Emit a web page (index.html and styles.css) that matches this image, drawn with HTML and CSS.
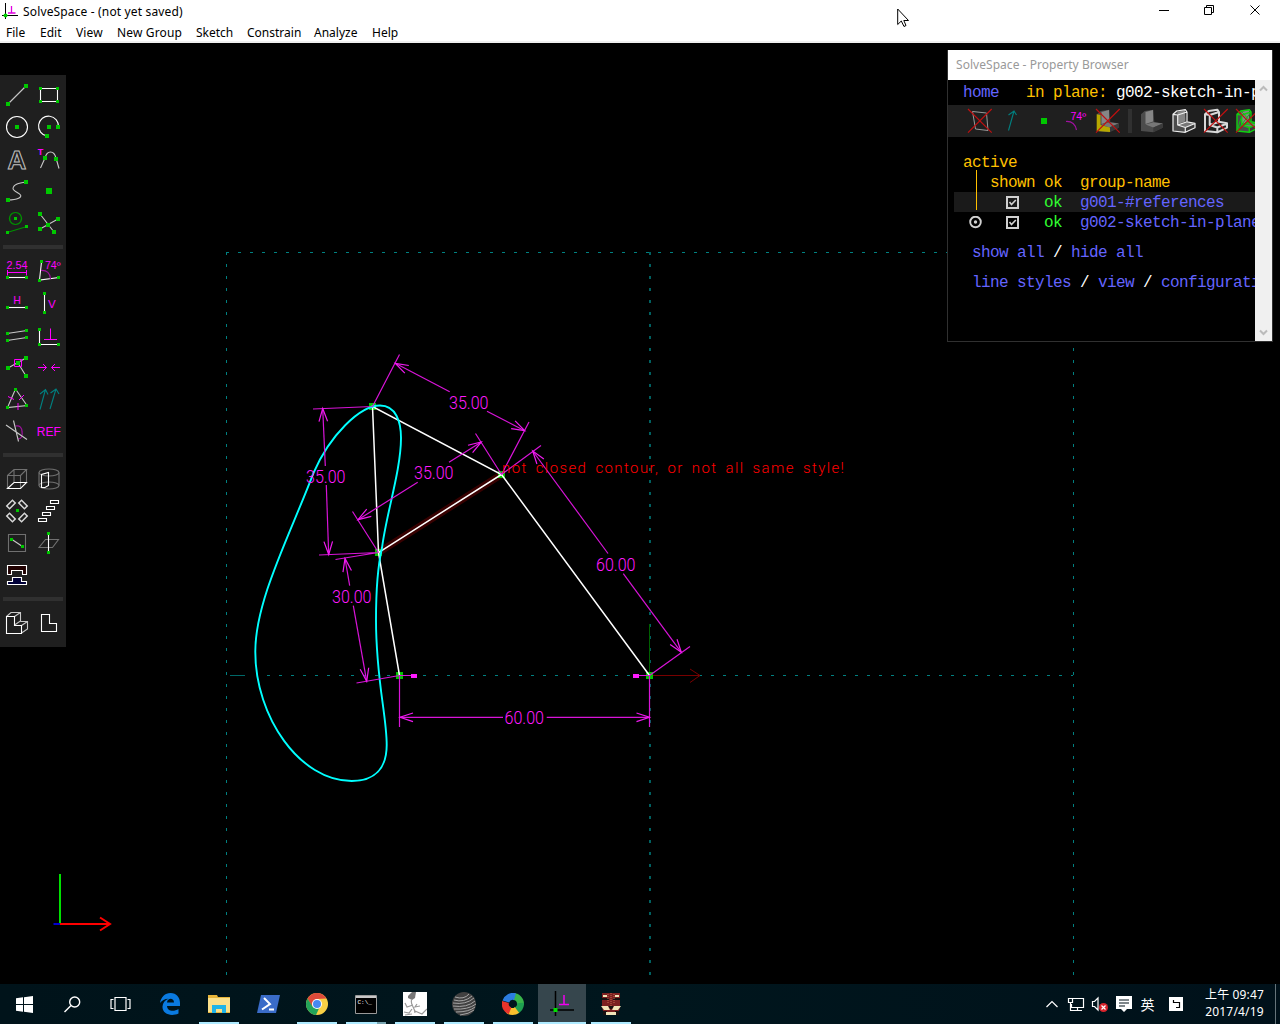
FILE: index.html
```html
<!DOCTYPE html>
<html lang="zh-Hant">
<head>
<meta charset="utf-8">
<title>SolveSpace - (not yet saved)</title>
<link rel="stylesheet" href="styles.css">
</head>
<body>
<svg class="defs" width="0" height="0">
  <defs>
    <marker id="arrow" viewBox="-14 -6 16 12" markerWidth="16" markerHeight="12" refX="0" refY="0" markerUnits="userSpaceOnUse" orient="auto-start-reverse"><path d="M-13 -4.3L0 0L-13 4.3" fill="none" stroke="#f01af0" stroke-width="1.2"/></marker>
    <symbol id="solid" viewBox="0 0 32 32">
      <path fill="#4c4c4c" d="M5 9.3L8.7 6L17.3 4.7L18.3 17.3L26.7 18.3V22.7L17.3 27.3L5 26Z"/>
      <path fill="#868686" d="M9.5 7L17 5V16.5L9.5 19Z"/>
      <path fill="#777" d="M9.5 19.5L17.5 17.3L26.5 18.5L17.3 22.5Z"/>
      <path fill="#3a3a3a" d="M17.3 22.5L26.7 18.5V22.7L17.3 27.3Z"/>
    </symbol>
    <symbol id="edges" viewBox="0 0 32 32"><path fill="none" stroke-linejoin="round" d="M5 9.3L8.7 6L17.3 4.7L19 7V16.8L27 18.3V22.7L17.3 27.3L5 26ZM5 9.3L9.7 10V20L17.3 22.5L27 18.5M9.7 10L19 7M9.7 20L18.5 17M17.3 22.5V27"/></symbol>
    <symbol id="cross" viewBox="0 0 32 32"><path fill="none" stroke="#c01010" stroke-width="1.2" d="M4 4L27.7 27.7M27.7 4L4 27.7"/></symbol>
  </defs>
</svg>

<header class="titlebar">
  <svg class="app-icon" width="17" height="17" viewBox="0 0 17 17"><path d="M3.5 1V17M0 13.5H16" stroke="#000"/><path d="M9.5 4V11M6 11H13.500" stroke="#e000e0" stroke-width="1.3"/><circle cx="3.500" cy="13.500" r="2" fill="#00d000"/></svg>
  <span class="title">SolveSpace - (not yet saved)</span>
  <svg class="win-controls" width="110" height="22" viewBox="0 0 110 22" fill="none" stroke="#000"><path d="M4 10.500H14M49.500 7.500H56.500V14.500H49.500ZM51.500 7V5.500H58.500V12.500H57M95.500 5.500L104.500 14.500M104.500 5.500L95.500 14.500"/></svg>
</header>
<nav class="menubar">
  <span class="w-file">File</span><span class="w-edit">Edit</span><span class="w-view">View</span><span class="w-new">New Group</span><span class="w-sketch">Sketch</span><span class="w-con">Constrain</span><span class="w-ana">Analyze</span><span>Help</span>
</nav>

<main class="workspace">
<svg class="canvas" width="1280" height="941" viewBox="0 43 1280 941">
  <g fill="none" stroke="#008080" stroke-dasharray="3 9">
    <path d="M226.500 252V976M1073.500 252V976"/>
    <path d="M650 252V976" stroke-width="1.5"/>
    <path d="M226 252.500H1073"/>
    <path d="M267 675.500H1073"/>
    <path d="M230 675.500H245" stroke-dasharray="none" stroke="#006868"/>
  </g>
  <path d="M649.500 624V675" stroke="#006000"/>
  <path d="M650 675.500H700M690 669L700 675.500L690 682.500" fill="none" stroke="#780000"/>
  <path d="M501.500 474.500L378.500 552.500" stroke="#380000" stroke-width="7"/>
  <g fill="#00c800"><path d="M369 403h7v7h-7zM375 549h7v7h-7zM498 471h7v7h-7zM396 672h7v7h-7zM646 672h7v7h-7z"/></g>
  <path d="M378.500 552.500L372.500 406.500L501.500 474.500L378.500 552.500L399.500 675.500M501.500 474.500L649.500 675.500" fill="none" stroke="#fff" stroke-width="1.500"/>
  <path class="trace" d="M380 405.500C396 405.500 401 422 401 438C401 470 386 515 382 548C378 565 376 590 376 620C376 680 386.700 715 386.700 745C386.700 768 375 781 351.700 781C300 781 255.300 717 255.300 651.700C255.300 600 290 535 313.300 473.300C330 435 360 405.500 380 405.500Z"/>
  <g class="dim">
    <path d="M372.500 406.500L399.500 354.500M501.500 474.500L529 422M372.500 406.500L313 409M378.500 552.500L319 555M378.500 552.500L352.500 511.500M501.500 474.500L475.500 433.500M501.500 474.500L541 445.500M649.500 675.500L690 646.500M378.500 552.500L335.500 559.500M399.500 675.500L356.500 683M399.500 675V727M649.500 675V727M400 675.500H412M650 675.500H638"/>
    <path marker-start="url(#arrow)" d="M395.300 363.300L449.700 391.700"/>
    <path marker-end="url(#arrow)" d="M487 411.300L524.700 430.700"/>
    <path marker-start="url(#arrow)" d="M322.700 408.500L325.300 466"/>
    <path marker-end="url(#arrow)" d="M326.300 485L328.700 554.500"/>
    <path marker-start="url(#arrow)" d="M358 519.700L417.700 482.300"/>
    <path marker-end="url(#arrow)" d="M449 462.300L481.300 442"/>
    <path marker-start="url(#arrow)" d="M532.700 451L608 553.500"/>
    <path marker-end="url(#arrow)" d="M623.300 573.700L681.300 652.300"/>
    <path marker-start="url(#arrow)" d="M345 558.500L349.700 585.700"/>
    <path marker-end="url(#arrow)" d="M353.300 605.700L366.700 681.300"/>
    <path marker-start="url(#arrow)" d="M400 717.300H503"/>
    <path marker-end="url(#arrow)" d="M546.700 717.300H649.500"/>
  </g>
  <path fill="#ff1aff" d="M411 674h6v4h-6zM633 674h6v4h-6z"/>
  <g class="dim-text">
    <text x="449" y="408.700" textLength="39.500" lengthAdjust="spacingAndGlyphs">35.00</text>
    <text x="306" y="482.700" textLength="39.500" lengthAdjust="spacingAndGlyphs">35.00</text>
    <text x="414" y="478.700" textLength="39.500" lengthAdjust="spacingAndGlyphs">35.00</text>
    <text x="596" y="570.500" textLength="39.500" lengthAdjust="spacingAndGlyphs">60.00</text>
    <text x="332" y="602.700" textLength="39.500" lengthAdjust="spacingAndGlyphs">30.00</text>
    <text x="504.500" y="723.700" textLength="39.500" lengthAdjust="spacingAndGlyphs">60.00</text>
  </g>
  <text class="error-text" x="502" y="472.700" textLength="342">not closed contour, or not all same style!</text>
  <g fill="none" stroke-width="2"><path d="M60 874V924" stroke="#00e000"/><path d="M60 924H110M100 917.500L110 924L100 930.500" stroke="#f00"/><path d="M53.500 924H60" stroke="#0000d0"/></g>
</svg>

<aside class="toolbar">
  <div class="tools">
    <svg class="t"><path class="lg" d="M7 25L25 7"/><path class="g" d="M5 23h4v4H5zM23 5h4v4h-4z"/></svg>
    <svg class="t"><path class="w" d="M7.500 9.500H24.500V22.500H7.500Z"/><path class="g" d="M6 8h3v3H6zM23 8h3v3h-3zM6 21h3v3H6zM23 21h3v3h-3z"/></svg>
    <svg class="t"><circle class="w" cx="16" cy="16" r="10.500"/><path class="g" d="M14 14h4v4h-4z"/></svg>
    <svg class="t"><path class="w" d="M25.500 16A10 10 0 1 0 14 25"/><path class="g" d="M14 14h4v4h-4zM23 14h4v4h-4zM12 23h4v4h-4z"/></svg>
    <svg class="t"><text class="letter" x="16" y="26" text-anchor="middle">A</text></svg>
    <svg class="t"><path class="lg" d="M7.500 25L12 15C14 7 21 7 23 15L26 25.500"/><path class="g" d="M10 13h4v4h-4zM21 14h4v4h-4z"/><text class="m" x="4.800" y="12.300" font-size="9" font-weight="bold">T</text></svg>
    <svg class="t"><path class="lg" d="M7 25C17 25 21 22 19.500 20C18 18 12 16 12 13.500C12.500 9 18 8 25 7"/><path class="g" d="M5 23h4v4H5zM23 5h4v4h-4z"/></svg>
    <svg class="t"><path class="g" d="M13 13h6v6h-6z"/></svg>
    <svg class="t"><path stroke="#009000" fill="none" stroke-width="1.200" d="M6 25.500L26 19.500M14.500 5.500a6 6 0 1 0 .01 0"/><path class="g" d="M13 10h3v3h-3zM5 24h3v3H5zM24 18h3v3h-3z"/></svg>
    <svg class="t"><path class="lg" d="M7 7L21 25M25 12L7 22"/><path class="g" d="M5 5h4v4H5zM23 10h4v4h-4zM13 16h4v4h-4zM5 20h4v4H5zM19 23h4v4h-4z"/></svg>
  </div>
  <hr>
  <div class="tools">
    <svg class="t"><text class="m" x="5.500" y="13.700" font-size="10" textLength="21" lengthAdjust="spacingAndGlyphs">2.54</text><path class="mg" d="M6.500 15V20.500M25.500 15V20.500M6.500 17.500H25.500"/><path class="w" d="M6 22.500H26"/><path class="g" d="M5 21h3v3H5zM24 21h3v3h-3z"/></svg>
    <svg class="t"><path class="w" d="M8.500 7L6.500 25L26 22.500"/><path class="pu" d="M8 15.500Q17 15 17.500 24"/><text class="m" x="12" y="14" font-size="10" textLength="15.500" lengthAdjust="spacingAndGlyphs">74º</text><path class="g" d="M7 5h3v3H7zM5 24h3v3H5zM24 21h3v3h-3z"/></svg>
    <svg class="t"><text class="m" x="12.200" y="17" font-size="10.500">H</text><path class="w" d="M6 20.500H26"/><path class="g" d="M5 19h3v3H5zM24 19h3v3h-3z"/></svg>
    <svg class="t"><text class="m" x="15" y="20.500" font-size="11.500">V</text><path class="w" d="M11.500 6V26"/><path class="g" d="M10 5h3v3h-3zM10 24h3v3h-3z"/></svg>
    <svg class="t"><path class="lg" d="M6 14.500L26 11.500M6 21.500L26 18.500"/><path class="g" d="M5 13h3v3H5zM24 10h3v3h-3zM5 20h3v3H5zM24 17h3v3h-3z"/></svg>
    <svg class="t"><path class="w" d="M6.500 11V25.500H26"/><path class="mg" d="M17.500 9.500V20.500M11 20.500H24"/><path class="g" d="M5 9h3v3H5zM5 24h3v3H5zM24 24h3v3h-3z"/></svg>
    <svg class="t"><path class="lg" d="M7 17L25 7M17 12L25 25"/><path class="g" d="M5 15h4v4H5zM15 10h4v4h-4zM23 5h4v4h-4zM23 23h4v4h-4z"/><path class="mg" d="M13.500 8.500H20.500V15.500H13.500Z"/></svg>
    <svg class="t"><path class="mg" d="M5 16.500H13.500M10 13L13.500 16.500L10 20M27 16.500H18.500M22 13L18.500 16.500L22 20"/></svg>
    <svg class="t"><path class="lg" d="M14.500 6L6.500 24.500L26 22.500Z"/><path class="mg" d="M7 13.500L13 16.500M23 12L18 17M17 20V27"/><path class="g" d="M13 5h3v3h-3zM5 23h3v3H5zM24 21h3v3h-3z"/></svg>
    <svg class="t"><path class="te" d="M7 26.500L12.500 6.500M7 11L12.500 6.500L15 11.500M17 26L23 6M17.500 10L23 6L26 11"/></svg>
    <svg class="t"><path class="pu" d="M14.500 11C19 10 21 13 21 16.500C22 21 20 24 17 24"/><path class="lg" d="M5 10L26 24.500M12.500 5.500L17.500 26.500"/></svg>
    <svg class="t"><text class="m" x="3.800" y="20.700" font-size="12.500" textLength="24" lengthAdjust="spacingAndGlyphs">REF</text></svg>
  </div>
  <hr>
  <div class="tools">
    <svg class="t"><path class="gr" d="M6.500 25V12.500H19.500V25M6.500 12.500L13 6.500H25.500L19.500 12.500M13 6.500V19M25.500 6.500V19"/><path class="w" d="M6.500 25.500H19.500L25.500 19.500H13Z"/></svg>
    <svg class="t"><path class="gr" d="M6 9.500V22.500M26 9.500V22.500"/><ellipse class="gr" cx="16" cy="9.500" rx="10" ry="3.500"/><ellipse class="gr" cx="16" cy="22.500" rx="10" ry="3.500"/><path class="w" d="M8.500 11.500V24.500H12L15.500 22.500V9.500L8.500 11.500Z"/></svg>
    <svg class="t"><g class="w pills"><rect x="6" y="7.500" width="8" height="4" transform="rotate(-45 10 9.500)"/><rect x="18" y="7.500" width="8" height="4" transform="rotate(45 22 9.500)"/><rect x="6" y="20.500" width="8" height="4" transform="rotate(45 10 22.500)"/><rect x="18" y="20.500" width="8" height="4" transform="rotate(-45 22 22.500)"/></g><path class="g" d="M15 14h3v3h-3z"/></svg>
    <svg class="t"><path class="w" d="M17.500 5.500h8v3h-8zM13.500 11.500h8v3h-8zM9.500 17.500h8v3h-8zM5.500 23.500h8v3h-8z"/></svg>
    <svg class="t"><path class="gr" d="M7.500 7.500H24.500V24.500H7.500Z"/><path class="lg" d="M11 12.500L21.500 19.500"/><path class="g" d="M9 11h3v3H9zM20 18h3v3h-3z"/></svg>
    <svg class="t"><path class="gr" d="M12.500 12.500H25.500L19.500 20.500H6Z"/><path class="w" d="M15.500 6V26"/><path class="g" d="M14 5h3v3h-3zM14 24h3v3h-3z"/></svg>
    <svg class="t"><path class="w die-top" d="M6.500 6.500H25.500V15.500H21.500V11.500H10.500V15.500H6.500Z"/><path class="w die-base" d="M11.500 18.500H20.500V22.500H25.500V25.500H6.500V22.500H11.500Z"/></svg>
    <svg class="t"></svg>
  </div>
  <hr>
  <div class="tools">
    <svg class="t"><path class="lg" d="M5.500 9.500L10 5.500H19.500V14L13.500 18M13.500 9.500L19.500 5.500M19.500 14.500H26.500V22L20.500 26M20.500 18.500L26.500 14.500"/><path class="w" d="M5.500 9.500H13.500V18.500H20.500V26.500H5.500Z"/></svg>
    <svg class="t"><path class="w" d="M8.500 7.500H16.500V16.500H23.500V24.500H8.500Z"/></svg>
  </div>
</aside>

<section class="browser">
  <div class="browser-title">SolveSpace - Property Browser</div>
  <div class="browser-body">
    <div class="browser-text">
      <div class="row first"><b>home</b>   <i>in plane:</i> g002-sketch-in-plane</div>
      <div class="strip">
        <svg class="t"><path fill="none" stroke="#999" d="M8.500 6.500L22.500 8L24 25.500L11.500 24Z"/><use href="#cross"/></svg>
        <svg class="t"><path class="te" d="M12.500 25.500L18 6M12.500 10L18 6L20.500 10"/></svg>
        <svg class="t"><path class="g" d="M13 13h6v6h-6z"/></svg>
        <svg class="t"><path class="pu" d="M6 16.500Q14.500 16 16.500 25"/><text class="m" x="10.500" y="15" font-size="10" textLength="15.500" lengthAdjust="spacingAndGlyphs">74º</text></svg>
        <svg class="t"><use href="#solid"/><path fill="#b8a800" d="M4.700 9.300L8.500 10V20L18 22.500V27L4.700 26Z"/><use href="#cross"/></svg>
        <span class="strip-gap"></span>
        <svg class="t"><use href="#solid"/></svg>
        <svg class="t"><use href="#solid"/><use href="#edges" stroke="#eee" stroke-width="1.200"/></svg>
        <svg class="t"><use href="#edges" stroke="#d8d8d8" stroke-width="2"/><use href="#cross"/></svg>
        <svg class="t"><use href="#solid"/><use href="#edges" stroke="#10d010" stroke-width="1.400"/><path stroke="#10c010" fill="none" d="M5 26L19 7M10 10L5 26M10 20L27 18M9 6L19 17"/><use href="#cross"/></svg>
      </div>
      <div class="row"><i>active</i></div>
      <div class="row"><i>   shown ok  group-name</i></div>
      <div class="row cells shade"><span class="c-act"></span><span class="c-shown"><svg width="13" height="13" viewBox="0 0 13 13" fill="none" stroke="#d0d0d0"><path stroke-width="2" d="M1 1H12V12H1Z"/><path stroke-width="1.600" d="M3.500 6L5.500 8.500L9.800 4"/></svg></span><span class="c-ok">ok</span><b>g001-#references</b></div>
      <div class="row cells"><span class="c-act"><svg width="13" height="13" viewBox="0 0 13 13"><circle cx="6.500" cy="6" r="5.300" fill="none" stroke="#d0d0d0" stroke-width="1.900"/><circle cx="6.500" cy="6" r="1.700" fill="#d0d0d0"/></svg></span><span class="c-shown"><svg width="13" height="13" viewBox="0 0 13 13" fill="none" stroke="#d0d0d0"><path stroke-width="2" d="M1 1H12V12H1Z"/><path stroke-width="1.600" d="M3.500 6L5.500 8.500L9.800 4"/></svg></span><span class="c-ok">ok</span><b>g002-sketch-in-plane</b></div>
      <div class="row spaced"> <b>show all</b> / <b>hide all</b></div>
      <div class="row spaced"> <b>line styles</b> / <b>view</b> / <b>configuration</b></div>
      <span class="tree-line"></span>
    </div>
    <div class="scroll">
      <svg width="9" height="7" viewBox="0 0 9 7"><path d="M1 5.500L4.500 2L8 5.500" fill="none" stroke="#bbb" stroke-width="2"/></svg>
      <svg width="9" height="7" viewBox="0 0 9 7"><path d="M1 1.500L4.500 5L8 1.500" fill="none" stroke="#bbb" stroke-width="2"/></svg>
    </div>
  </div>
</section>
</main>

<footer class="taskbar">
  <div class="slot"><svg width="17" height="17" viewBox="0 0 17 17"><path fill="#fff" d="M0 2.300L7 1.300V8H0zM8 1.200L17 0V8H8zM0 9H7V15.700L0 14.700zM8 9H17V17L8 15.800z"/></svg></div>
  <div class="slot"><svg width="17" height="17" viewBox="0 0 17 17" fill="none" stroke="#fff" stroke-width="1.400"><circle cx="10.700" cy="6" r="5"/><path d="M7 9.500L.5 16"/></svg></div>
  <div class="slot"><svg width="21" height="16" viewBox="0 0 21 16" fill="none" stroke="#fff" stroke-width="1.200"><path d="M5 1.500H16V14.500H5ZM3.500 3.500H1V12.500H3.500M17.500 3.500H20V12.500H17.500"/></svg></div>
  <div class="apps">
    <div class="slot"><svg width="22" height="22" viewBox="0 0 22 22"><path fill="#0a7ae0" d="M1 10C2 4 6 0 11.500 0C17.500 0 21 4.500 21 10V13H8C8.500 19 15.500 18.500 19.500 16V20.500C12 24 3 21 3.500 13.500C3.700 10 6 7 9.500 5.700C5.500 5.800 3 7.500 1 10ZM8 9.500H15C15 4.500 8.500 4.500 8 9.500Z"/></svg></div>
    <div class="slot run"><svg width="22" height="18" viewBox="0 0 22 18"><path fill="#e8b53a" d="M0 0H9L10 2H22V18H0z"/><path fill="#fbe08a" d="M0 3H22V17H0z"/><path fill="#1fb4e8" d="M4 10H18V18H14V14H8V18H4z"/></svg></div>
    <div class="slot"><svg width="23" height="18" viewBox="0 0 23 18"><path fill="#3a6cc8" d="M4 0H23L19 18H0z"/><path d="M7 3L13 9L5 14.500M12 14.500H17" fill="none" stroke="#fff" stroke-width="2"/></svg></div>
    <div class="slot run"><svg width="22" height="22" viewBox="0 0 22 22"><circle cx="11" cy="11" r="11" fill="#f9d045"/><path fill="#dd4a3a" d="M1.500 5.500A11 11 0 0 1 20.500 5.500L11 6L6 13.500z"/><path fill="#22a45a" d="M1.500 5.500L6.500 13.500L13 15.500L10 22A11 11 0 0 1 1.500 5.500z"/><circle cx="11" cy="11" r="5" fill="#fff"/><circle cx="11" cy="11" r="4" fill="#4688f0"/></svg></div>
    <div class="slot run more"><svg width="22" height="19" viewBox="0 0 22 19"><path fill="#000" stroke="#999" d="M.5 .5H21.500V18.500H.5z"/><path fill="#c8c8c8" d="M1 1H21V3H1z"/><text x="2.500" y="9" font-size="6" class="cmd">C:\_</text></svg></div>
    <div class="slot run"><svg width="24" height="24" viewBox="0 0 24 24"><path fill="#fff" d="M0 0H24V24H0z"/><path fill="#777" d="M5 4L9 0H13L12 6L9 8L5 6z"/><path d="M9 7C6 12 12 15 12 21M2 11L4 15L10 13M1 20L6 21L9 17M12 19L19 22L24 17M14 12L12 15L17 14M2 23L9 22" fill="none" stroke="#999" stroke-width="1.200"/></svg></div>
    <div class="slot run"><svg width="24" height="24" viewBox="0 0 24 24"><circle cx="12" cy="12" r="12" fill="#414141"/><path d="M3 5Q12 8 17 2M2 8Q12 11 20 4M1 11Q14 13 22 6M1 14Q15 16 23 9M2 17Q16 18 24 12M4 20Q17 20 23 15M8 23Q17 22 22 18" fill="none" stroke="#a6a6a6" stroke-width="1"/></svg></div>
    <div class="slot run"><svg width="22" height="22" viewBox="0 0 22 22" fill="none" stroke-width="7"><path stroke="#39b54a" d="M11 3.500A7.500 7.500 0 0 1 18.500 11"/><path stroke="#1fa050" d="M18.500 10A7.500 7.500 0 0 1 13 18"/><path stroke="#fbc02d" d="M15 17A7.500 7.500 0 0 1 6 17"/><path stroke="#e8332c" d="M8 17.900A7.500 7.500 0 0 1 3.500 9"/><path stroke="#2b7de0" d="M3.800 8.500A7.500 7.500 0 0 1 13 3.700"/></svg></div>
    <div class="slot active"><svg width="25" height="25" viewBox="0 0 25 25"><path d="M5.500 0V25M0 19H24" stroke="#000" stroke-width="1.500" fill="none"/><path d="M14 4V13.500M9 13.500H19" stroke="#f000f0" stroke-width="1.500"/><path fill="#00e000" d="M3.500 17h4v4h-4z"/></svg></div>
    <div class="slot run"><svg width="22" height="24" viewBox="0 0 22 24"><path fill="#7c2020" d="M2 1H20V15L18 23H4L2 15z"/><path fill="#181010" d="M2 6H9V8H2zM13 6H20V8H13zM8 14H14L12 17H10zM3 19H7V23H3zM15 19H19V23H15z"/><path fill="#f1e4b8" d="M3 3H7V5H3zM15 3H19V5H15zM1 14H8L10 18H4zM21 14H14L12 18H18zM6 20H16V23H6z"/><path stroke="#c36a50" stroke-dasharray="1 1" d="M8 2V12M11 1V14M14 2V12"/></svg></div>
  </div>
  <div class="tray">
    <svg width="165" height="40" viewBox="1036 984 165 40" fill="none" stroke="#fff" stroke-width="1.200">
      <path d="M1046.500 1007L1052 1001.500L1057.500 1007"/>
      <path d="M1072 998.500H1083.500V1007.500H1071.500V1004M1077.500 1007.500V1010.500M1073 1010.500H1082M1068.500 998.500H1072.500V1002.500H1068.500ZM1070.500 1002.500V1010.500H1074"/>
      <path d="M1092.500 1001.500H1094.500L1098 998V1010L1094.500 1006.500H1092.500Z"/>
      <circle cx="1103.500" cy="1007.500" r="4.500" fill="#d8242c" stroke="none"/><path d="M1101.500 1005.500L1105.500 1009.500M1105.500 1005.500L1101.500 1009.500"/>
      <path fill="#fff" stroke="none" d="M1116 996H1132V1009H1127L1124 1012L1121 1009H1116Z"/><path stroke="#001018" d="M1119 1000H1129M1119 1003H1129M1119 1006H1125"/>
      <text class="ime" x="1140.500" y="1009.500">英</text>
      <path fill="#fff" stroke="none" d="M1169 997H1183V1011H1169Z"/><path stroke="#000" stroke-width="1.200" d="M1173.500 1000V1002.500H1179.500V1007.500H1176"/>
    </svg>
  </div>
  <div class="clock"><span>上午 09:47</span><span>2017/4/19</span></div>
  <span class="peek"></span>
</footer>

<svg class="cursor" width="13" height="20" viewBox="0 0 13 20"><path fill="#fff" stroke="#000" d="M.7 1V16.500L4.300 13L7 18.500L9 17.500L6.800 12.500H11.500Z"/></svg>
</body>
</html>
```
FILE: styles.css
```css
* { box-sizing: border-box; }
body {
  margin: 0;
  width: 1280px;
  height: 1024px;
  display: flex;
  flex-direction: column;
  overflow: hidden;
  background: #000;
  font: 12px "Noto Sans", "Noto Sans CJK TC", sans-serif;
  color: #000;
}
svg { display: block; flex: none; }
.defs { position: absolute; }

.titlebar { height: 23px; background: #fff; display: flex; align-items: flex-start; padding-left: 2px; }
.app-icon { margin: 2px 4px 0 0; }
.title { line-height: 23px; flex: 1; white-space: nowrap; letter-spacing: .15px; }
.win-controls { margin-right: 15px; }
.menubar { height: 20px; background: #fff; border-bottom: 2px solid #f0f0f0; display: flex; padding-left: 6px; line-height: 19px; white-space: nowrap; }
.menubar span { flex: none; }
.w-file { width: 34px; }
.w-edit { width: 36px; }
.w-view { width: 41px; letter-spacing: .15px; }
.w-new { width: 79px; letter-spacing: .15px; }
.w-sketch { width: 51px; }
.w-con { width: 67px; }
.w-ana { width: 58px; }

.workspace { position: relative; height: 941px; }
.trace { fill: none; stroke: #0ff; stroke-width: 1.9; }
.dim path { fill: none; stroke: #d814d8; stroke-width: 1.2; }
.dim-text { font: 300 17.5px Roboto, sans-serif; fill: #ff1aff; }
.error-text { font: 300 15px Roboto, sans-serif; fill: #ff0000; word-spacing: 3px; }

.toolbar { position: absolute; left: 0; top: 32px; width: 66px; height: 572px; padding: 4px 1px 0; background: #1f1f1f; }
.tools { display: grid; grid-template-columns: 32px 32px; grid-auto-rows: 32px; }
.toolbar hr { height: 4px; margin: 6px 2px; border: 0; background: #303030; }
.t { width: 32px; height: 32px; overflow: visible; }
.w { fill: none; stroke: #fff; stroke-width: 1.1; }
.lg { fill: none; stroke: #c8c8c8; stroke-width: 1.1; }
.gr { fill: none; stroke: #707070; stroke-width: 1.1; }
.g { fill: #00c800; }
.mg { fill: none; stroke: #f0f; }
.pu { fill: none; stroke: #a010a0; stroke-width: 1.2; }
.te { fill: none; stroke: #008080; stroke-width: 1.1; }
.m { fill: #f0f; font-family: "Liberation Sans", sans-serif; }
.pills { stroke: #d8d8d8; stroke-width: 1.5; }
.die-top { fill: #200000; }
.die-base { fill: #000038; }
.letter { font: bold 26px "Liberation Sans", sans-serif; fill: #1f1f1f; stroke: #c0c0c0; stroke-width: 1; }

.browser { position: absolute; left: 947px; top: 7px; width: 326px; height: 292px; border: 1px solid #303030; border-top: 0; background: #000; }
.browser-title { height: 30px; background: #fff; color: #999; line-height: 30px; padding-left: 8px; letter-spacing: .04px; }
.browser-body { display: flex; height: 261px; }
.browser-text {
  position: relative;
  width: 307px;
  overflow: hidden;
  padding-top: 2px;
  color: #fff;
  font: 16px "Liberation Mono", monospace;
  letter-spacing: -.6px;
}
.row { height: 20px; line-height: 22px; margin-left: 6px; padding-left: 9px; white-space: pre; }
.row i { font-style: normal; color: #ffc000; }
.row b { font-weight: normal; color: #6464ff; }
.strip { display: flex; margin: 3px 0 15px; height: 32px; padding-left: 16px; background: #1f1f1f; letter-spacing: 0; }
.strip-gap { flex: none; width: 4px; height: 24px; margin: 4px; background: #303030; }
.cells { display: flex; padding-left: 0; }
.cells > * { flex: none; }
.shade { background: #1a1a1a; }
.c-act { width: 45px; padding: 4px 0 0 15px; }
.c-shown { width: 45px; padding: 4px 0 0 7px; }
.c-ok { width: 36px; color: #30ff30; }
.spaced { margin-top: 10px; }
.tree-line { position: absolute; left: 28px; top: 90px; width: 1px; height: 40px; background: #ffc000; }
.scroll { width: 17px; background: #f0f0f0; display: flex; flex-direction: column; justify-content: space-between; align-items: center; padding: 5px 0; }

.taskbar { height: 40px; display: flex; background: linear-gradient(90deg, #00131a, #00161d 50%, #00111a); color: #fff; }
.slot { width: 48px; height: 40px; flex: none; display: flex; align-items: center; justify-content: center; }
.apps { display: flex; gap: 1px; padding-left: 2px; }
.run { background: linear-gradient(#aeeaff, #aeeaff) 4px 38px / 40px 2px no-repeat; }
.more { background: linear-gradient(90deg, #aeeaff 31px, #78a4b0 31px) 4px 38px / 40px 2px no-repeat; }
.active { background: #36464d; border-bottom: 2px solid #aeeaff; }
.cmd { fill: #fff; font-family: "Liberation Mono", monospace; }
.tray { margin-left: auto; }
.ime { font: 14px "Noto Sans CJK TC", sans-serif; fill: #fff; stroke: none; }
.clock { width: 67px; display: flex; flex-direction: column; align-items: center; line-height: 17px; padding-top: 2px; white-space: nowrap; letter-spacing: .15px; }
.peek { width: 1px; margin: 0 4px 0 7px; background: #66747a; }

.cursor { position: absolute; left: 897px; top: 8px; }
```
